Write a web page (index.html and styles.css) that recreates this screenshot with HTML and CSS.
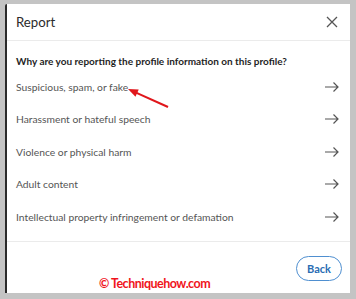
FILE: index.html
```html
<!DOCTYPE html>
<html>
<head>
<meta charset="utf-8">
<link rel="stylesheet" href="styles.css">
</head>
<body>
<div class="dialog">
  <div class="header">
    <span class="title">Report</span>
    <svg class="close" width="12" height="12" viewBox="0 0 12 12"><path d="M1 1L11 11M11 1L1 11" stroke="#555" stroke-width="1.3" fill="none"/></svg>
  </div>
  <div class="content">
    <div class="question">Why are you reporting the profile information on this profile?</div>
    <ul class="options">
      <li class="option"><span>Suspicious, spam, or fake</span><svg class="arrow" width="14" height="10" viewBox="0 0 14 10"><path d="M0 5H13M8.5 0.5L13 5L8.5 9.5" stroke="#555" stroke-width="1.2" fill="none"/></svg></li>
      <li class="option"><span>Harassment or hateful speech</span><svg class="arrow" width="14" height="10" viewBox="0 0 14 10"><path d="M0 5H13M8.5 0.5L13 5L8.5 9.5" stroke="#555" stroke-width="1.2" fill="none"/></svg></li>
      <li class="option"><span>Violence or physical harm</span><svg class="arrow" width="14" height="10" viewBox="0 0 14 10"><path d="M0 5H13M8.5 0.5L13 5L8.5 9.5" stroke="#555" stroke-width="1.2" fill="none"/></svg></li>
      <li class="option"><span>Adult content</span><svg class="arrow" width="14" height="10" viewBox="0 0 14 10"><path d="M0 5H13M8.5 0.5L13 5L8.5 9.5" stroke="#555" stroke-width="1.2" fill="none"/></svg></li>
      <li class="option"><span>Intellectual property infringement or defamation</span><svg class="arrow" width="14" height="10" viewBox="0 0 14 10"><path d="M0 5H13M8.5 0.5L13 5L8.5 9.5" stroke="#555" stroke-width="1.2" fill="none"/></svg></li>
    </ul>
  </div>
  <div class="footer">
    <button class="back">Back</button>
  </div>
  <svg class="pointer" width="46" height="23" viewBox="0 0 46 23"><path d="M42 20L10 5.6" stroke="#e0161b" stroke-width="2" fill="none"/><path d="M2 2L12.7 2.45L9.5 9.75Z" fill="#e0161b"/></svg>
  <div class="watermark">© Techniquehow.com</div>
</div>
</body>
</html>
```
FILE: styles.css
```css
html, body {
  margin: 0;
  padding: 0;
}
body {
  background: #c4c4c4;
  width: 356px;
  height: 299px;
  padding: 4px 6px 6px 5px;
  box-sizing: border-box;
  font-family: "Lato", "Noto Sans", sans-serif;
}
.dialog {
  position: relative;
  background: #fff;
  height: 289px;
  border-left: 2px solid #2a2a2a;
  border-top-left-radius: 2px;
  box-sizing: border-box;
  display: flex;
  flex-direction: column;
}
.header {
  height: 38px;
  box-sizing: border-box;
  border-bottom: 1px solid #ebebeb;
  display: flex;
  align-items: center;
  justify-content: space-between;
  padding: 0 12px 0 9px;
}
.title {
  font-size: 13.2px;
  color: #2b2b2b;
}
.content {
  padding: 12px 0 0 9px;
  flex: 1;
}
.question {
  font-size: 10px;
  font-weight: 700;
  color: #1f1f1f;
  line-height: 16px;
}
.options {
  list-style: none;
  margin: 9px 0 0;
  padding: 0;
}
.option {
  height: 32.5px;
  display: flex;
  align-items: center;
  justify-content: space-between;
  padding-right: 11px;
  font-size: 10.3px;
  color: #555;
  margin-top: -8px;
  margin-bottom: 8px;
}
.footer {
  border-top: 1px solid #ebebeb;
  height: 53px;
  box-sizing: border-box;
  display: flex;
  justify-content: flex-end;
  padding: 14px 8px 0 0;
}
.back {
  width: 46px;
  height: 25px;
  border: 1px solid #4f8fd0;
  border-radius: 13px;
  background: #fff;
  color: #2a6db3;
  font-family: "Lato", sans-serif;
  font-size: 11px;
  font-weight: 700;
  padding: 0;
}
.pointer {
  position: absolute;
  left: 119px;
  top: 83px;
}
.watermark {
  position: absolute;
  left: 92px;
  top: 272px;
  font-family: "Lato", sans-serif;
  font-weight: bold;
  font-size: 12.5px;
  letter-spacing: -0.5px;
  color: #f0141c;
}
```
